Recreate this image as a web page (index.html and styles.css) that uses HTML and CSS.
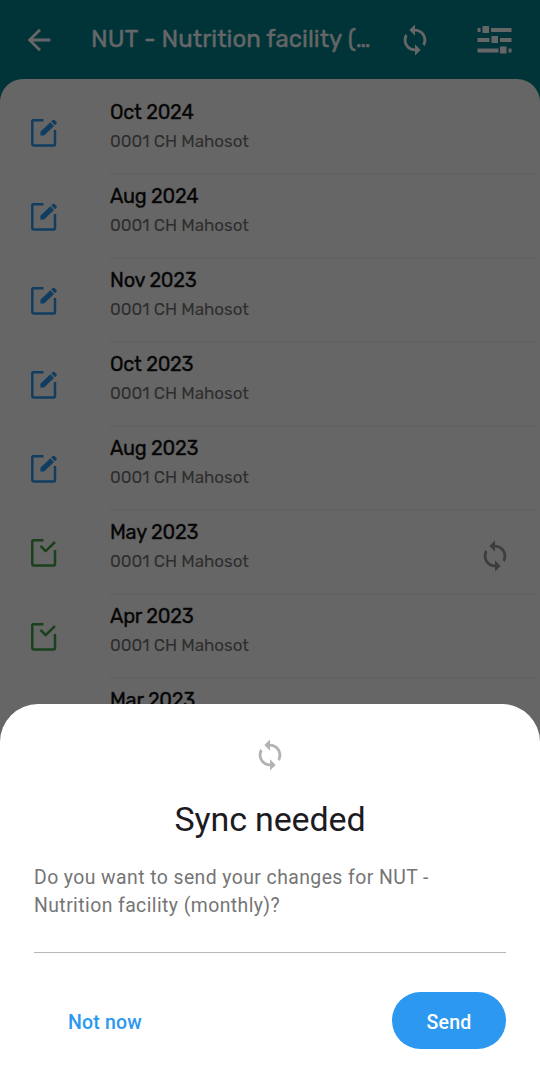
FILE: index.html
```html
<!DOCTYPE html>
<html lang="en">
<head>
<meta charset="utf-8">
<title>NUT - Nutrition facility (monthly)</title>
<link rel="stylesheet" href="styles.css">
</head>
<body>
<svg class="defs" aria-hidden="true">
  <symbol id="sync" viewBox="0 0 24 24"><path fill="currentColor" d="M12 4V1L8 5l4 4V6c3.31 0 6 2.69 6 6 0 1.01-.25 1.97-.7 2.8l1.46 1.46C19.54 15.03 20 13.57 20 12c0-4.42-3.58-8-8-8zm0 14c-3.31 0-6-2.69-6-6 0-1.01.25-1.97.7-2.8L5.24 7.74C4.46 8.97 4 10.43 4 12c0 4.42 3.58 8 8 8v3l4-4-4-4v3z"/></symbol>
  <symbol id="edit" viewBox="0 0 28 30"><path fill="none" stroke="currentColor" stroke-width="2.5" stroke-linejoin="round" d="M13.500 2.3H3.2Q2.3 2.3 2.3 3.2V26.6Q2.3 27.5 3.2 27.5H24.1Q25 27.5 25 26.6V12"/><path fill="currentColor" d="M10.400 17.600V13.800L20.300 4.200 24 7.900 14.200 17.600ZM21.200 3.600L22.800 2.100Q23.700 1.300 24.600 2.100L26.500 4Q27.300 4.900 26.500 5.700L24.900 7.300Z"/></symbol>
  <symbol id="done" viewBox="0 0 28 30"><path fill="none" stroke="currentColor" stroke-width="2.5" stroke-linejoin="round" d="M13.500 2.3H3.2Q2.3 2.3 2.3 3.2V26.6Q2.3 27.5 3.2 27.5H24.1Q25 27.5 25 26.6V12M10.500 7.800L15.600 13.200 25 4"/></symbol>
</svg>
<div class="screen">
  <header class="bar">
    <svg class="back" viewBox="0 0 24 24"><path fill="currentColor" d="M20 11H7.83l5.59-5.59L12 4l-8 8 8 8 1.41-1.41L7.83 13H20v-2z"/></svg>
    <h1 class="bar-title">NUT - Nutrition facility (…</h1>
    <svg class="icon bar-sync"><use href="#sync"/></svg>
    <svg class="filter" viewBox="0 0 36 30"><path fill="currentColor" d="M.5 3h3v4h-3zM5.500 1h6.500v7H5.500zM14 3h20.500v4H14zM.5 13h12v4h-12zM14.500 11H21v7h-6.500zM23 13h11.500v4H23zM.5 23.500h21v4H.5zM23 21.500h6.500v7H23zM31.500 23.500h3v4h-3z"/></svg>
  </header>
  <main class="list">
    <div class="row"><svg class="state edit"><use href="#edit"/></svg><div class="info"><h2>Oct 2024</h2><p>0001 CH Mahosot</p></div></div>
    <div class="row"><svg class="state edit"><use href="#edit"/></svg><div class="info"><h2>Aug 2024</h2><p>0001 CH Mahosot</p></div></div>
    <div class="row"><svg class="state edit"><use href="#edit"/></svg><div class="info"><h2>Nov 2023</h2><p>0001 CH Mahosot</p></div></div>
    <div class="row"><svg class="state edit"><use href="#edit"/></svg><div class="info"><h2>Oct 2023</h2><p>0001 CH Mahosot</p></div></div>
    <div class="row"><svg class="state edit"><use href="#edit"/></svg><div class="info"><h2>Aug 2023</h2><p>0001 CH Mahosot</p></div></div>
    <div class="row"><svg class="state done"><use href="#done"/></svg><div class="info with-sync"><div><h2>May 2023</h2><p>0001 CH Mahosot</p></div><svg class="icon row-sync"><use href="#sync"/></svg></div></div>
    <div class="row"><svg class="state done"><use href="#done"/></svg><div class="info"><h2>Apr 2023</h2><p>0001 CH Mahosot</p></div></div>
    <div class="row"><svg class="state done"><use href="#done"/></svg><div class="info"><h2>Mar 2023</h2><p>0001 CH Mahosot</p></div></div>
  </main>
  <div class="scrim"></div>
  <section class="sheet">
    <svg class="icon sheet-sync"><use href="#sync"/></svg>
    <h2 class="sheet-title">Sync needed</h2>
    <p class="message">Do you want to send your changes for NUT - Nutrition facility (monthly)?</p>
    <div class="actions"><button class="button text">Not now</button><button class="button filled">Send</button></div>
  </section>
</div>
</body>
</html>
```
FILE: styles.css
```css
* { box-sizing: border-box; }
body, h1, h2, p { margin: 0; }
body { font-family: Rubik, Roboto, sans-serif; }
.defs { position: absolute; width: 0; height: 0; }
.screen { position: relative; height: 1089px; overflow: hidden; background: #00838f; }
.bar { display: flex; align-items: center; height: 79px; padding: 0 27px 0 22px; color: #fff; }
.back { width: 34px; height: 34px; flex: none; }
.bar-title { width: 300px; margin-left: 35px; padding-bottom: 2px; font-size: 24px; font-weight: 400; line-height: 32px; letter-spacing: 0.05px; white-space: nowrap; -webkit-text-stroke: 0.3px; }
.icon { width: 34px; height: 34px; flex: none; }
.bar-sync { margin-left: 7px; }
.filter { width: 36px; height: 30px; margin-left: auto; flex: none; }
.list { height: 1010px; padding-top: 12px; background: #fff; border-radius: 23px 23px 0 0; overflow: hidden; }
.row { display: flex; height: 84px; padding-right: 5px; }
.state { width: 28px; height: 30px; margin: 27px 52px 0 30px; flex: none; }
.edit { color: #2c98f0; }
.done { color: #43a047; }
.info { flex: 1; padding-top: 9px; border-bottom: 2px solid #f2f2f2; }
.info h2 { color: #111; font-size: 20px; font-weight: 400; line-height: 24px; letter-spacing: -0.27px; -webkit-text-stroke: 0.35px; }
.info p { margin-top: 6px; color: #737373; font-size: 17px; line-height: 22px; letter-spacing: -0.03px; }
.with-sync { display: flex; justify-content: space-between; padding-right: 23px; }
.row-sync { margin-top: 19px; color: #9a9a9a; }
.scrim { position: absolute; inset: 0; background: rgba(0, 0, 0, 0.6); }
.sheet { position: absolute; inset: 704px 0 0; display: flex; flex-direction: column; padding: 34px 34px 0; background: #fff; border-radius: 38px 38px 0 0; font-family: Roboto, sans-serif; }
.sheet-sync { align-self: center; color: #b3b3b3; }
.sheet-title { margin-top: 25px; color: #1c1b1f; font-size: 34px; font-weight: 400; line-height: 44px; letter-spacing: -0.15px; text-align: center; }
.message { height: 90px; margin-top: 22px; padding-top: 1px; border-bottom: 1px solid #b8b8b8; color: #757575; font-size: 19.4px; line-height: 28.4px; letter-spacing: 0.42px; }
.actions { display: flex; justify-content: space-between; margin-top: 39px; }
.button { height: 57px; padding: 3px 34px 0; border: 0; border-radius: 29px; background: none; font: 500 19.5px Roboto, sans-serif; letter-spacing: 0.2px; }
.text { color: #2c98f0; }
.filled { width: 114px; color: #fff; background: #2c98f0; }
```
